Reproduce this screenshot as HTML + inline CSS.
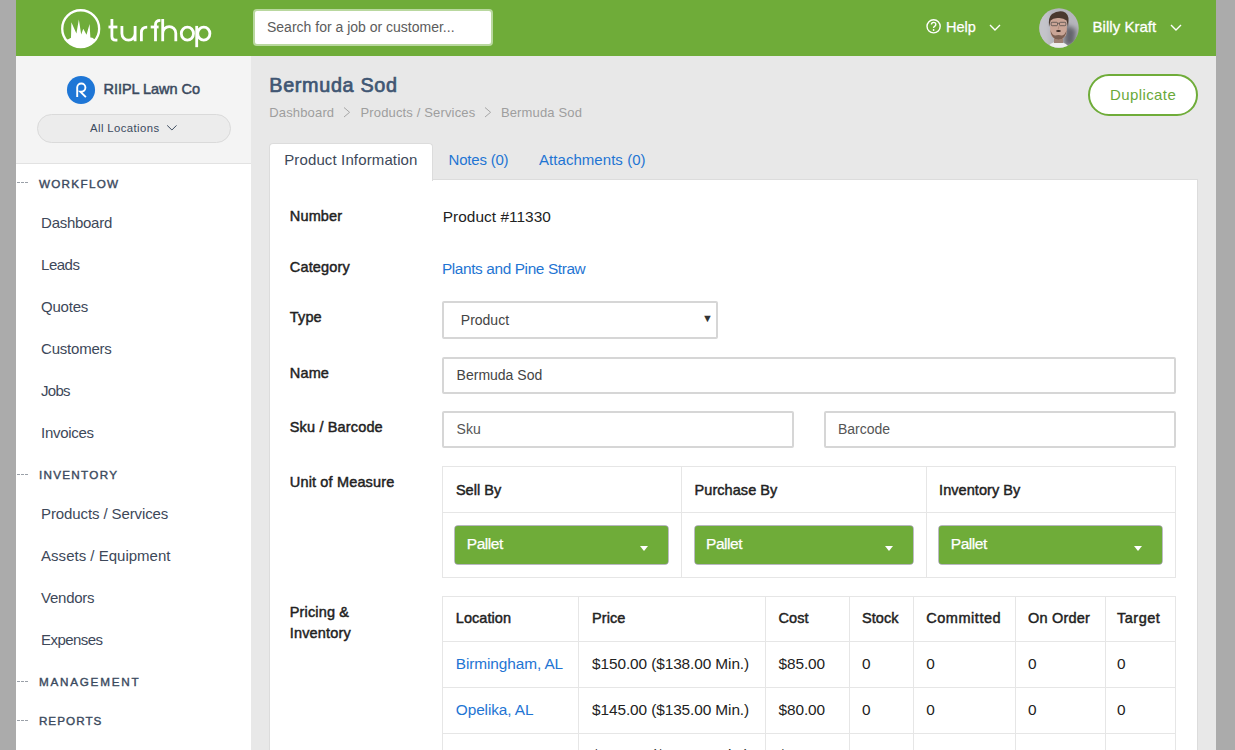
<!DOCTYPE html>
<html><head><meta charset="utf-8">
<style>
*{margin:0;padding:0;box-sizing:border-box}
html,body{width:1235px;height:750px;overflow:hidden;background:#ababab;font-family:"Liberation Sans",sans-serif}
.a{position:absolute}
.t{position:absolute;white-space:nowrap;line-height:1}
#hdr{left:16px;top:0;width:1200px;height:56px;background:#6fac39}
#side{left:16px;top:56px;width:235px;height:694px;background:#fff}
#sidetop{left:16px;top:56px;width:235px;height:108px;background:#f4f4f4;border-bottom:1px solid #e2e2e2}
#main{left:251px;top:56px;width:965px;height:694px;background:#e8e8e8}
.nav{font-size:15px;color:#3d4859}
.sec{font-size:11.7px;color:#3b4a5e;-webkit-text-stroke:0.4px #3b4a5e;letter-spacing:1.3px}
.dash{position:absolute;left:17px;width:11px;height:1px;background:repeating-linear-gradient(90deg,#9aa0a8 0 3px,transparent 3px 4px)}
.lbl{font-size:14.5px;color:#222;-webkit-text-stroke:0.45px #222;letter-spacing:0.15px}
.link{color:#1f75d3}
.inp{position:absolute;background:#fff;border:2px solid #d6d6d6;border-radius:2px}
.it{font-size:14px;color:#444}
.grn{position:absolute;background:#6fac39;border-radius:3px;box-shadow:0 0 0 0.7px rgba(80,80,100,.55)}
.pal{font-size:15.5px;color:#fff;letter-spacing:-0.45px;-webkit-text-stroke:0.25px #fff}
.car{position:absolute;width:0;height:0;border-left:4.2px solid transparent;border-right:4.2px solid transparent;border-top:5.2px solid #fff}
.hl{position:absolute;height:1px;background:#e6e6e6}
.vl{position:absolute;width:1px;background:#e6e6e6}
.th{font-size:14.5px;color:#222;-webkit-text-stroke:0.45px #222;letter-spacing:0.05px}
.td{font-size:15.4px;color:#222;letter-spacing:-0.1px}
.td.link{color:#1f75d3}
</style></head><body>
<div id="hdr" class="a"></div>
<div id="side" class="a"></div>
<div id="sidetop" class="a"></div>
<div id="main" class="a"></div>

<!-- header content -->
<svg class="a" style="left:58px;top:6px" width="46" height="46" viewBox="0 0 750 750">
  <defs><clipPath id="cc"><circle cx="370" cy="370" r="305"/></clipPath></defs>
  <circle cx="370" cy="370" r="301" fill="none" stroke="#fff" stroke-width="38"/>
  <path clip-path="url(#cc)" fill="#fff" d="M100 545 L160 545 L212 518 L218 265 L300 450 L340 220 L378 465 L412 370 L465 470 L515 295 L528 515 L560 518 L600 545 L660 545 L660 760 L100 760 Z"/>
</svg>
<svg class="a" style="left:104px;top:10px" width="112" height="42" viewBox="104 10 112 42">
  <g fill="none" stroke="#fff" stroke-width="2.8" stroke-linecap="butt">
    <path d="M111.9 19.1 V36.5 Q111.9 40.1 115.6 40.1 H117.4"/>
    <path d="M108.5 27 H117.4"/>
    <path d="M121.9 25.9 V33.6 A6.6 6.6 0 0 0 135.1 33.6 M135.1 25.9 V41.3"/>
    <path d="M141.4 41.3 V32.5 Q141.4 27.1 147.2 27.1"/>
    <path d="M155.5 41.3 V24.5 Q155.5 20.3 160.4 20.3"/>
    <path d="M150.7 27 H158.6"/>
    <path d="M162.7 19.1 V41.3 M162.7 33.2 A6.55 6.55 0 0 1 175.8 33.2 V41.3"/>
    <ellipse cx="187.4" cy="33.6" rx="6.1" ry="6.5"/>
    <path d="M196.7 25.9 V47.2"/>
    <ellipse cx="203.8" cy="33.6" rx="6.1" ry="6.5"/>
  </g>
</svg>

<div class="a" style="left:253px;top:9px;width:240px;height:37px;background:#fff;border:2px solid #b9d89f;border-radius:4px"></div>
<div class="t" style="left:267px;top:19.6px;font-size:14px;color:#5c5c5c">Search for a job or customer...</div>

<svg class="a" style="left:925px;top:18px" width="18" height="18" viewBox="0 0 18 18">
  <circle cx="8.6" cy="8.3" r="6.6" fill="none" stroke="#fff" stroke-width="1.4"/>
  <path d="M6.4 6.6 Q6.4 4.4 8.6 4.4 Q10.8 4.4 10.8 6.4 Q10.8 7.6 9.5 8.3 Q8.6 8.8 8.6 10" fill="none" stroke="#fff" stroke-width="1.4"/>
  <circle cx="8.6" cy="12" r="0.9" fill="#fff"/>
</svg>
<div class="t" style="left:946px;top:20px;font-size:14.5px;color:#fff;-webkit-text-stroke:0.25px #fff">Help</div>
<svg class="a" style="left:988px;top:22px" width="14" height="10" viewBox="0 0 14 10"><path d="M2 3 L7 8 L12 3" fill="none" stroke="#fff" stroke-width="1.4"/></svg>

<svg class="a" style="left:1039px;top:8px" width="40" height="40" viewBox="0 0 40 40">
  <defs><clipPath id="av"><circle cx="20" cy="20" r="19.7"/></clipPath>
  <filter id="bl" x="-20%" y="-20%" width="140%" height="140%"><feGaussianBlur stdDeviation="0.55"/></filter>
  <filter id="bl2" x="-50%" y="-50%" width="200%" height="200%"><feGaussianBlur stdDeviation="2.4"/></filter></defs>
  <g clip-path="url(#av)">
    <rect width="40" height="40" fill="#b6b6bd"/>
    <rect x="-4" y="-4" width="14" height="48" fill="#c4c4ca" filter="url(#bl2)"/>
    <path d="M26 17 L37 21 L36 37 L25 38 Z" fill="#64646c" filter="url(#bl2)"/>
    <g filter="url(#bl)">
    <path d="M8 41 Q10 34 19 33.5 Q28 34 31 41 Z" fill="#eeeeee"/>
    <rect x="15" y="27" width="9" height="8" fill="#9e8073"/>
    <path d="M11.2 15 Q11 8 19.5 7.8 Q27.8 8 27.8 15 L27.8 23 Q27.5 31 19.5 31.8 Q11.5 31 11.2 23 Z" fill="#caa596"/>
    <path d="M11.4 22 Q12 31 19.5 31.8 Q27 31 27.6 22 Q26 27 23 27.5 Q19.5 26.5 16 27.5 Q13 27 11.4 22 Z" fill="#7c6052"/>
    <path d="M10 19 Q9 9 13 6 Q18 2.5 24 3.5 Q30 5.5 29.5 13 L29 19 L27.6 12.5 Q24 9.5 19 10 Q14 9.8 11.6 12.5 Z" fill="#4a392e"/>
    <rect x="12.2" y="14.3" width="6.3" height="3.4" rx="1" fill="none" stroke="#3a3a3a" stroke-width="0.65"/>
    <rect x="20.5" y="14.3" width="6.3" height="3.4" rx="1" fill="none" stroke="#3a3a3a" stroke-width="0.65"/>
    <path d="M18.5 15.3 H20.5" stroke="#3a3a3a" stroke-width="0.6"/>
    <ellipse cx="19.5" cy="23" rx="2.4" ry="1.1" fill="#3a2a24"/>
    <path d="M20 18 L19.2 21.5" stroke="#a88474" stroke-width="0.7"/>
    </g>
  </g>
</svg>
<div class="t" style="left:1092.6px;top:19.2px;font-size:15px;color:#fff;letter-spacing:0.02px;-webkit-text-stroke:0.3px #fff">Billy Kraft</div>
<svg class="a" style="left:1168.5px;top:22px" width="14" height="10" viewBox="0 0 14 10"><path d="M2 3 L7 8 L12 3" fill="none" stroke="#fff" stroke-width="1.4"/></svg>

<!-- sidebar -->
<svg class="a" style="left:64px;top:74px" width="34" height="34" viewBox="64 74 34 34"><circle cx="81" cy="90" r="14.05" fill="#1e76d6"/><path d="M77.2 97.1 V87.6 A4.1 4.1 0 1 1 81.3 91.7 H80.3 L85.9 97.1" fill="none" stroke="#fff" stroke-width="1.9"/></svg>
<div class="t" style="left:103.6px;top:82.1px;font-size:14.5px;color:#3b4a5e;-webkit-text-stroke:0.5px #3b4a5e;letter-spacing:-0.05px">RIIPL Lawn Co</div>
<div class="a" style="left:36.5px;top:114px;width:194px;height:28.6px;border:1px solid #dadada;background:#ececec;border-radius:15px"></div>
<div class="t" style="left:90px;top:123.2px;font-size:11.3px;color:#3b4a5e;letter-spacing:0.42px">All Locations</div>
<svg class="a" style="left:165px;top:123px" width="13" height="10" viewBox="165 123 13 10"><path d="M167.2 125.4 L171.9 130 L176.5 125.4" fill="none" stroke="#3b4a5e" stroke-width="1"/></svg>

<div class="dash" style="top:182px"></div>
<div class="t sec" style="left:38.9px;top:177.7px">WORKFLOW</div>
<div class="t nav" style="left:41.1px;top:215.10px;letter-spacing:-0.28px">Dashboard</div>
<div class="t nav" style="left:41.1px;top:257.10px;letter-spacing:-0.50px">Leads</div>
<div class="t nav" style="left:41.1px;top:299.10px;letter-spacing:-0.24px">Quotes</div>
<div class="t nav" style="left:41.1px;top:341.10px;letter-spacing:-0.23px">Customers</div>
<div class="t nav" style="left:41.1px;top:383.10px;letter-spacing:-0.73px">Jobs</div>
<div class="t nav" style="left:41.1px;top:425.10px;letter-spacing:-0.29px">Invoices</div>
<div class="dash" style="top:474px"></div>
<div class="t sec" style="left:38.9px;top:468.8px">INVENTORY</div>
<div class="t nav" style="left:41.1px;top:506.00px;letter-spacing:-0.11px">Products / Services</div>
<div class="t nav" style="left:41.1px;top:548.00px;letter-spacing:0.01px">Assets / Equipment</div>
<div class="t nav" style="left:41.1px;top:590.00px;letter-spacing:-0.27px">Vendors</div>
<div class="t nav" style="left:41.1px;top:632.00px;letter-spacing:-0.56px">Expenses</div>
<div class="dash" style="top:681px"></div>
<div class="t sec" style="left:38.9px;top:675.9px;letter-spacing:1.77px">MANAGEMENT</div>
<div class="dash" style="top:720px"></div>
<div class="t sec" style="left:38.9px;top:714.9px;letter-spacing:1.03px">REPORTS</div>

<!-- main -->
<div class="t" style="left:269.3px;top:75.5px;font-size:19.8px;color:#405673;-webkit-text-stroke:0.7px #405673;letter-spacing:0.67px">Bermuda Sod</div>
<div class="t" style="left:269.3px;top:105.8px;font-size:13px;color:#9e9e9e;letter-spacing:0.15px">Dashboard</div>
<svg class="a" style="left:342px;top:106px" width="10" height="13" viewBox="0 0 10 13"><path d="M2 1.5 L7.6 6.3 L2 11" fill="none" stroke="#a6a6a6" stroke-width="1"/></svg>
<div class="t" style="left:360.5px;top:105.8px;font-size:13px;color:#9e9e9e;letter-spacing:0.15px">Products / Services</div>
<svg class="a" style="left:483px;top:106px" width="10" height="13" viewBox="0 0 10 13"><path d="M2 1.5 L7.6 6.3 L2 11" fill="none" stroke="#a6a6a6" stroke-width="1"/></svg>
<div class="t" style="left:500.9px;top:105.8px;font-size:13px;color:#9e9e9e;letter-spacing:0.15px">Bermuda Sod</div>

<div class="a" style="left:1088px;top:74px;width:110px;height:41.5px;border:2px solid #6fac39;background:#fff;border-radius:21px"></div>
<div class="t" style="left:1110px;top:87px;font-size:15px;color:#6aa93a;letter-spacing:0.4px">Duplicate</div>

<div class="a" style="left:269px;top:179px;width:929px;height:600px;background:#fff;border:1px solid #dcdcdc"></div>
<div class="a" style="left:269px;top:143px;width:163.5px;height:37.5px;background:#fff;border:1px solid #dcdcdc;border-bottom:none;border-radius:4px 4px 0 0"></div>
<div class="t" style="left:284.2px;top:152.2px;font-size:15px;color:#3d4859;letter-spacing:0.13px">Product Information</div>
<div class="t link" style="left:448.6px;top:152.2px;font-size:15px;letter-spacing:-0.22px">Notes (0)</div>
<div class="t link" style="left:539px;top:152.2px;font-size:15px;letter-spacing:0.05px">Attachments (0)</div>

<!-- form -->
<div class="t lbl" style="left:289.8px;top:208.95px">Number</div>
<div class="t" style="left:442.7px;top:209px;font-size:15.4px;color:#222;letter-spacing:0.05px">Product #11330</div>
<div class="t lbl" style="left:289.8px;top:260.25px">Category</div>
<div class="t link" style="left:441.9px;top:260.6px;font-size:15.4px;letter-spacing:-0.38px">Plants and Pine Straw</div>
<div class="t lbl" style="left:289.8px;top:310.45px">Type</div>
<div class="inp" style="left:442px;top:301px;width:276px;height:38px;border-radius:2px"></div>
<div class="t it" style="left:460.8px;top:312.9px">Product</div>
<div class="t" style="left:702px;top:313px;font-size:11px;color:#333">&#9660;</div>
<div class="t lbl" style="left:289.8px;top:365.85px">Name</div>
<div class="inp" style="left:442px;top:357px;width:734px;height:37px"></div>
<div class="t it" style="left:456.6px;top:367.9px">Bermuda Sod</div>
<div class="t lbl" style="left:289.8px;top:420.25px">Sku / Barcode</div>
<div class="inp" style="left:442px;top:411.2px;width:351.5px;height:36.5px"></div>
<div class="t it" style="left:456.6px;top:422px;color:#555">Sku</div>
<div class="inp" style="left:824px;top:411.2px;width:352px;height:36.5px"></div>
<div class="t it" style="left:838px;top:422px;color:#555">Barcode</div>

<div class="t lbl" style="left:289.8px;top:475.25px">Unit of Measure</div>
<div class="a" style="left:442px;top:466px;width:734px;height:111.5px;border:1px solid #e6e6e6"></div>
<div class="hl" style="left:442px;top:512px;width:734px"></div>
<div class="vl" style="left:681px;top:466px;height:111px"></div>
<div class="vl" style="left:926px;top:466px;height:111px"></div>
<div class="t th" style="left:455.9px;top:482.75px">Sell By</div>
<div class="t th" style="left:694.6px;top:482.75px">Purchase By</div>
<div class="t th" style="left:939.1px;top:482.75px">Inventory By</div>
<div class="grn" style="left:455.3px;top:525.8px;width:213px;height:38.4px"></div>
<div class="grn" style="left:694.8px;top:525.8px;width:218.5px;height:38.4px"></div>
<div class="grn" style="left:939.3px;top:525.8px;width:222.8px;height:38.4px"></div>
<div class="t pal" style="left:466.8px;top:535.8px">Pallet</div>
<div class="t pal" style="left:706px;top:535.8px">Pallet</div>
<div class="t pal" style="left:950.8px;top:535.8px">Pallet</div>
<div class="car" style="left:640.2px;top:546.2px"></div>
<div class="car" style="left:884.8px;top:546.2px"></div>
<div class="car" style="left:1133.8px;top:546.2px"></div>

<div class="t lbl" style="left:289.8px;top:604.95px">Pricing &amp;</div>
<div class="t lbl" style="left:289.8px;top:625.55px">Inventory</div>
<div class="a" style="left:442px;top:595.5px;width:734px;height:200px;border:1px solid #e6e6e6"></div>
<div class="hl" style="left:442px;top:641px;width:734px"></div>
<div class="hl" style="left:442px;top:687px;width:734px"></div>
<div class="hl" style="left:442px;top:733px;width:734px"></div>
<div class="vl" style="left:578px;top:595.5px;height:200px"></div>
<div class="vl" style="left:765px;top:595.5px;height:200px"></div>
<div class="vl" style="left:849px;top:595.5px;height:200px"></div>
<div class="vl" style="left:913px;top:595.5px;height:200px"></div>
<div class="vl" style="left:1015px;top:595.5px;height:200px"></div>
<div class="vl" style="left:1104.5px;top:595.5px;height:200px"></div>
<div class="t th" style="left:455.8px;top:611.45px">Location</div>
<div class="t th" style="left:592.1px;top:611.45px">Price</div>
<div class="t th" style="left:778.5px;top:611.45px">Cost</div>
<div class="t th" style="left:862px;top:611.45px">Stock</div>
<div class="t th" style="left:926.2px;top:611.45px;letter-spacing:0.55px">Committed</div>
<div class="t th" style="left:1028px;top:611.45px;letter-spacing:0.2px">On Order</div>
<div class="t th" style="left:1117px;top:611.45px;letter-spacing:0.5px">Target</div>

<div class="t td link" style="left:455.8px;top:656.2px">Birmingham, AL</div>
<div class="t td" style="left:592.1px;top:656.2px">$150.00 ($138.00 Min.)</div>
<div class="t td" style="left:778.5px;top:656.2px">$85.00</div>
<div class="t td" style="left:862px;top:656.2px">0</div>
<div class="t td" style="left:926.2px;top:656.2px">0</div>
<div class="t td" style="left:1028px;top:656.2px">0</div>
<div class="t td" style="left:1117px;top:656.2px">0</div>

<div class="t td link" style="left:455.8px;top:702.3px">Opelika, AL</div>
<div class="t td" style="left:592.1px;top:702.3px">$145.00 ($135.00 Min.)</div>
<div class="t td" style="left:778.5px;top:702.3px">$80.00</div>
<div class="t td" style="left:862px;top:702.3px">0</div>
<div class="t td" style="left:926.2px;top:702.3px">0</div>
<div class="t td" style="left:1028px;top:702.3px">0</div>
<div class="t td" style="left:1117px;top:702.3px">0</div>

<div class="t td" style="left:592.1px;top:747.4px">$140.00 ($130.00 Min.)</div>
<div class="t td" style="left:778.5px;top:747.4px">$75.00</div>

<div class="a" style="left:1216px;top:0;width:19px;height:750px;background:#ababab"></div>
</body></html>
